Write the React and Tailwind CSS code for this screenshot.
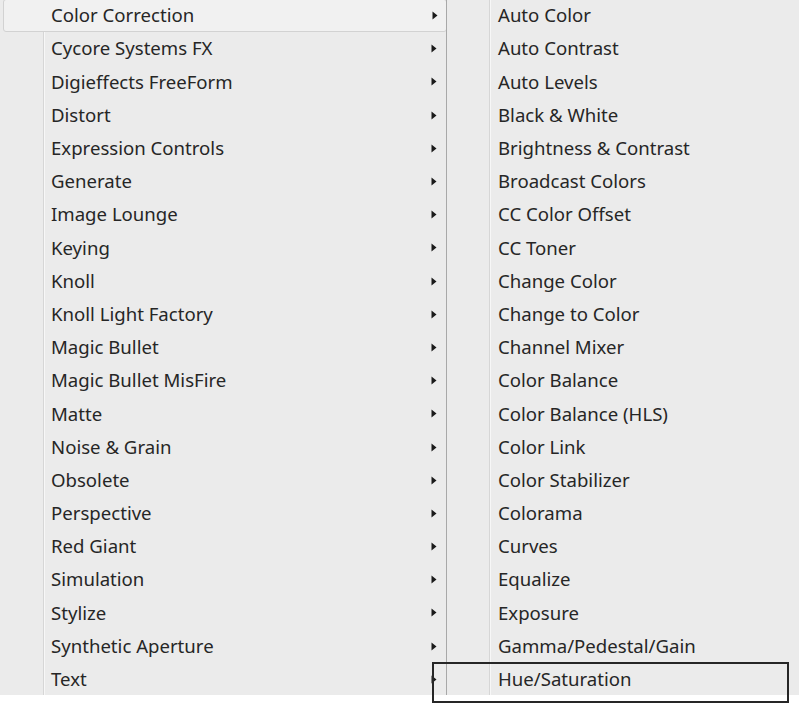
import React from "react";

const left = [
  "Color Correction",
  "Cycore Systems FX",
  "Digieffects FreeForm",
  "Distort",
  "Expression Controls",
  "Generate",
  "Image Lounge",
  "Keying",
  "Knoll",
  "Knoll Light Factory",
  "Magic Bullet",
  "Magic Bullet MisFire",
  "Matte",
  "Noise & Grain",
  "Obsolete",
  "Perspective",
  "Red Giant",
  "Simulation",
  "Stylize",
  "Synthetic Aperture",
  "Text",
];

const right = [
  "Auto Color",
  "Auto Contrast",
  "Auto Levels",
  "Black & White",
  "Brightness & Contrast",
  "Broadcast Colors",
  "CC Color Offset",
  "CC Toner",
  "Change Color",
  "Change to Color",
  "Channel Mixer",
  "Color Balance",
  "Color Balance (HLS)",
  "Color Link",
  "Color Stabilizer",
  "Colorama",
  "Curves",
  "Equalize",
  "Exposure",
  "Gamma/Pedestal/Gain",
  "Hue/Saturation",
];

function Arrow() {
  return (
    <svg width="6" height="9" viewBox="0 0 6 9" className="shrink-0">
      <path d="M0.5 0.5 L5.5 4.5 L0.5 8.5 Z" fill="#1a1a1a" />
    </svg>
  );
}

export default function App() {
  return (
    <div
      className="relative w-[799px] h-[706px] bg-white overflow-hidden text-[18.6px] text-[#262626]"
      style={{ fontFamily: '"Noto Sans", "Open Sans", sans-serif' }}
    >
      <div className="flex h-[697px] -mt-[2px]">
        {/* Left menu */}
        <div className="relative w-[447px] bg-[#ebebeb] border-r border-[#a8a8a8] flex flex-col overflow-hidden">
          <div className="absolute left-[43px] top-0 bottom-0 w-[1px] bg-[#d6d6d6]" />
          <div className="absolute left-[44px] top-0 bottom-0 w-[1px] bg-[#f7f7f7]" />
          {left.map((t, i) => (
            <div
              key={t}
              className={
                i === 0
                  ? "relative h-[33.2px] shrink-0 mt-[1px] ml-[3px] -mr-[1px] pl-[47px] pr-[8px] flex items-center justify-between rounded-[3px] border border-[#d2d2d2] bg-[#f1f1f1]"
                  : "relative h-[33.2px] shrink-0 pl-[51px] pr-[9px] flex items-center justify-between"
              }
            >
              <span className="leading-none">{t}</span>
              <Arrow />
            </div>
          ))}
        </div>
        {/* Right menu */}
        <div className="relative flex-1 bg-[#ebebeb] flex flex-col pt-[1px] overflow-hidden">
          <div className="absolute left-[42px] top-0 bottom-0 w-[1px] bg-[#d6d6d6]" />
          <div className="absolute left-[43px] top-0 bottom-0 w-[1px] bg-[#f7f7f7]" />
          {right.map((t) => (
            <div
              key={t}
              className="relative h-[33.2px] shrink-0 pl-[51px] flex items-center"
            >
              <span className="leading-none">{t}</span>
            </div>
          ))}
        </div>
      </div>
      <div className="absolute left-[432px] top-[662px] w-[357px] h-[41px] border-2 border-[#262626]" />
    </div>
  );
}
